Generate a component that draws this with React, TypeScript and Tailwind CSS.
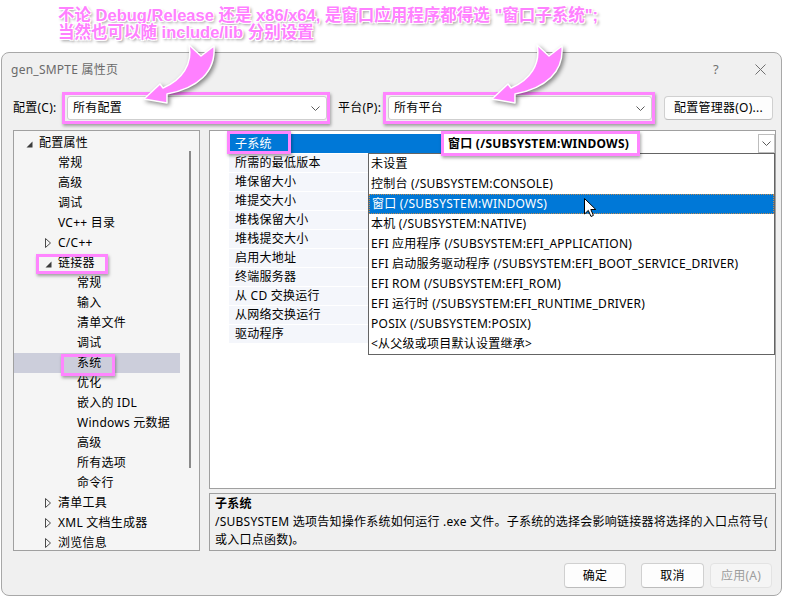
import React from "react";

type TreeItem = { label: string; level: 0 | 1 | 2; icon?: "open" | "closed"; selected?: boolean };

const treeItems: TreeItem[] = [
  { label: "配置属性", level: 0, icon: "open" },
  { label: "常规", level: 1 },
  { label: "高级", level: 1 },
  { label: "调试", level: 1 },
  { label: "VC++ 目录", level: 1 },
  { label: "C/C++", level: 1, icon: "closed" },
  { label: "链接器", level: 1, icon: "open" },
  { label: "常规", level: 2 },
  { label: "输入", level: 2 },
  { label: "清单文件", level: 2 },
  { label: "调试", level: 2 },
  { label: "系统", level: 2, selected: true },
  { label: "优化", level: 2 },
  { label: "嵌入的 IDL", level: 2 },
  { label: "Windows 元数据", level: 2 },
  { label: "高级", level: 2 },
  { label: "所有选项", level: 2 },
  { label: "命令行", level: 2 },
  { label: "清单工具", level: 1, icon: "closed" },
  { label: "XML 文档生成器", level: 1, icon: "closed" },
  { label: "浏览信息", level: 1, icon: "closed" },
];

const levelPad: Record<number, string> = {
  0: "pl-[12px]",
  1: "pl-[31px]",
  2: "pl-[50px]",
};

const gridNames = [
  "所需的最低版本",
  "堆保留大小",
  "堆提交大小",
  "堆栈保留大小",
  "堆栈提交大小",
  "启用大地址",
  "终端服务器",
  "从 CD 交换运行",
  "从网络交换运行",
  "驱动程序",
];

const options = [
  "未设置",
  "控制台 (/SUBSYSTEM:CONSOLE)",
  "窗口 (/SUBSYSTEM:WINDOWS)",
  "本机 (/SUBSYSTEM:NATIVE)",
  "EFI 应用程序 (/SUBSYSTEM:EFI_APPLICATION)",
  "EFI 启动服务驱动程序 (/SUBSYSTEM:EFI_BOOT_SERVICE_DRIVER)",
  "EFI ROM (/SUBSYSTEM:EFI_ROM)",
  "EFI 运行时 (/SUBSYSTEM:EFI_RUNTIME_DRIVER)",
  "POSIX (/SUBSYSTEM:POSIX)",
  "<从父级或项目默认设置继承>",
];

function Chevron() {
  return (
    <svg width="9" height="5" viewBox="0 0 9 5" className="shrink-0">
      <path d="M0.5 0.5 L4.5 4.5 L8.5 0.5" fill="none" stroke="#5a5a5a" strokeWidth="1" />
    </svg>
  );
}

function TreeGlyph({ icon }: { icon?: "open" | "closed" }) {
  if (icon === "open")
    return (
      <svg width="7" height="7" viewBox="0 0 7 7" className="mt-[2px]">
        <path d="M6.5 0.5 L6.5 6.5 L0.5 6.5 Z" fill="#3c3c3c" />
      </svg>
    );
  if (icon === "closed")
    return (
      <svg width="6" height="10" viewBox="0 0 6 10">
        <path d="M0.5 0.5 L5.5 5 L0.5 9.5 Z" fill="none" stroke="#4a4a4a" strokeWidth="1" />
      </svg>
    );
  return null;
}

function PinkBox({ className }: { className: string }) {
  return (
    <div
      className={`absolute border-[3px] border-[#ff85ff] shadow-[1px_2px_3px_rgba(0,0,0,0.35)] pointer-events-none ${className}`}
    />
  );
}

function Select({ value, width }: { value: string; width: string }) {
  return (
    <div
      className={`${width} h-[24px] bg-white border border-[#cfcfcf] rounded-[3px] flex items-center pl-[5px] pr-[6px] justify-between`}
    >
      <span>{value}</span>
      <Chevron />
    </div>
  );
}

function Button({ label, disabled }: { label: string; disabled?: boolean }) {
  return (
    <div
      className={`h-[25px] flex items-center justify-center rounded-[4px] border ${
        disabled
          ? "bg-[#f5f5f5] border-[#e3e3e3] text-[#9d9d9d]"
          : "bg-[#fdfdfd] border-[#d0d0d0] border-b-[#bcbcbc] text-black"
      } ${label === "确定" ? "w-[62px]" : label === "取消" ? "w-[63px] ml-[15px]" : "w-[62px] ml-[6px]"}`}
    >
      {label}
    </div>
  );
}

function Tree() {
  return (
    <div className="ml-[11px] w-[187px] h-[421px] border border-[#a0a0a0] bg-[#f5f5f5] flex">
      <div className="w-[166px] pt-[2px]">
        {treeItems.map((item, i) => (
          <div
            key={i}
            className={`h-[20px] flex items-center ${levelPad[item.level]} ${item.selected ? "bg-[#cccedb]" : ""}`}
          >
            <div className="w-[13px] flex items-center">
              <TreeGlyph icon={item.icon} />
            </div>
            <span className="whitespace-nowrap">{item.label}</span>
          </div>
        ))}
      </div>
      <div className="flex-1 flex justify-center pt-[20px]">
        <div className="w-[2px] h-[317px] bg-[#8a8a8a]" />
      </div>
    </div>
  );
}

function PropertyGrid() {
  return (
    <div className="relative h-[359px] border border-[#a0a0a0] bg-white pt-[3px]">
      <div className="flex h-[19px]">
        <div className="w-[19px]" />
        <div className="w-[215px] bg-[#0078d7] text-white pl-[6px] flex items-center">子系统</div>
        <div className="flex-1 flex bg-white">
          <div className="flex-1 flex items-center pl-[4px] font-bold">窗口 (/SUBSYSTEM:WINDOWS)</div>
          <div className="w-[17px] border border-[#bdbdbd] flex items-center justify-center">
            <Chevron />
          </div>
        </div>
      </div>
      {gridNames.map((name) => (
        <div key={name} className="flex h-[19px]">
          <div className="w-[19px]" />
          <div className="w-[215px] bg-[#f4f6fb] border-t border-white pl-[6px] flex items-center whitespace-nowrap">
            {name}
          </div>
          <div className="flex-1" />
        </div>
      ))}

      <div className="absolute left-[158px] top-[22px] w-[407px] h-[202px] bg-white border border-[#646464]">
        {options.map((opt) => (
          <div
            key={opt}
            className={`h-[20px] flex items-center pl-[2px] whitespace-nowrap ${
              opt.startsWith("窗口")
                ? "bg-[#0078d7] text-white border border-dotted border-[#c08a50]"
                : ""
            }`}
          >
            {opt}
          </div>
        ))}
      </div>
    </div>
  );
}

function Description() {
  return (
    <div className="mt-[4px] h-[58px] border border-[#a0a0a0] bg-[#f0f0f0] pl-[5px] pt-[1px] leading-[18px]">
      <div className="font-bold">子系统</div>
      <div>
        /SUBSYSTEM 选项告知操作系统如何运行 .exe 文件。子系统的选择会影响链接器将选择的入口点符号(
        <br />
        或入口点函数)。
      </div>
    </div>
  );
}

export default function App() {
  return (
    <div className="relative w-[786px] h-[596px] overflow-hidden bg-white text-[12px] tracking-[0.25px] text-black font-['Noto_Sans','Noto_Sans_CJK_SC',sans-serif]">
      {/* annotation */}
      <div className="h-[52px] pt-[7px] pl-[58px] font-['Liberation_Sans','Noto_Sans_CJK_SC',sans-serif] font-bold text-[16.5px] leading-[17px] tracking-normal text-[#ff80ff] [text-shadow:-1px_-1px_0_#fff,1px_-1px_0_#fff,-1px_1px_0_#fff,1px_1px_0_#fff,2px_2px_3px_rgba(0,0,0,0.45)]">
        <div>不论 Debug/Release 还是 x86/x64, 是窗口应用程序都得选 "窗口子系统";</div>
        <div>当然也可以随 include/lib 分别设置</div>
      </div>

      {/* dialog */}
      <div className="ml-[1px] w-[781px] h-[544px] bg-[#f0f0f0] border border-[#a8a8a8] rounded-[8px] flex flex-col">
        <div className="h-[33px] flex items-center pl-[9px]">
          <span className="text-[#6a6a6a]">gen_SMPTE 属性页</span>
          <div className="ml-auto flex items-center text-[#707070]">
            <div className="w-[46px] flex justify-center text-[13px]">?</div>
            <div className="w-[42px] flex justify-center">
              <svg width="11" height="11" viewBox="0 0 11 11">
                <path d="M0.5 0.5 L10.5 10.5 M10.5 0.5 L0.5 10.5" stroke="#707070" strokeWidth="1" />
              </svg>
            </div>
          </div>
        </div>

        <div className="h-[44px] flex items-center pl-[11px]">
          <span className="w-[54px]">配置(C):</span>
          <Select value="所有配置" width="w-[260px]" />
          <span className="ml-[11px] w-[50px]">平台(P):</span>
          <Select value="所有平台" width="w-[264px]" />
          <div className="ml-[12px] w-[109px] h-[24px] bg-[#fdfdfd] border border-[#d0d0d0] border-b-[#bcbcbc] rounded-[4px] flex items-center justify-center">
            配置管理器(O)...
          </div>
        </div>

        <div className="h-[421px] flex">
          <Tree />
          <div className="ml-[9px] w-[567px] flex flex-col">
            <PropertyGrid />
            <Description />
          </div>
        </div>

        <div className="mt-[12px] flex justify-end pr-[9px]">
          <Button label="确定" />
          <Button label="取消" />
          <Button label="应用(A)" disabled />
        </div>
      </div>

      {/* highlight boxes */}
      <PinkBox className="left-[62px] top-[92px] w-[268px] h-[32px]" />
      <PinkBox className="left-[383px] top-[92px] w-[272px] h-[32px]" />
      <PinkBox className="left-[36px] top-[254px] w-[72px] h-[20px]" />
      <PinkBox className="left-[61px] top-[354px] w-[54px] h-[22px]" />
      <PinkBox className="left-[227px] top-[131px] w-[64px] h-[23px]" />
      <PinkBox className="left-[441px] top-[131px] w-[199px] h-[25px]" />

      {/* arrows */}
      <svg
        width="786"
        height="120"
        viewBox="0 0 786 120"
        className="absolute left-0 top-0 pointer-events-none drop-shadow-[2px_2px_2px_rgba(0,0,0,0.45)]"
      >
        <path
          d="M189 45 L201 56 L214 46 C216 72 198 88 167 94 L167 103 L144 99 L160 84 L163 88 C182 80 193 64 189 45 Z"
          fill="#ff80ff"
          stroke="#fff"
          strokeWidth="1.5"
          strokeLinejoin="round"
        />
        <path
          transform="translate(348 0)"
          d="M189 45 L201 56 L214 46 C216 72 198 88 167 94 L167 103 L144 99 L160 84 L163 88 C182 80 193 64 189 45 Z"
          fill="#ff80ff"
          stroke="#fff"
          strokeWidth="1.5"
          strokeLinejoin="round"
        />
      </svg>

      {/* mouse cursor */}
      <svg width="13" height="20" viewBox="0 0 13 20" className="absolute left-[584px] top-[198px] pointer-events-none">
        <path d="M0.5 0.5 L0.5 16 L4.3 12.4 L7 18.5 L9.4 17.4 L6.8 11.5 L11.8 11.5 Z" fill="#fff" stroke="#000" strokeWidth="1" strokeLinejoin="round" />
      </svg>
    </div>
  );
}
